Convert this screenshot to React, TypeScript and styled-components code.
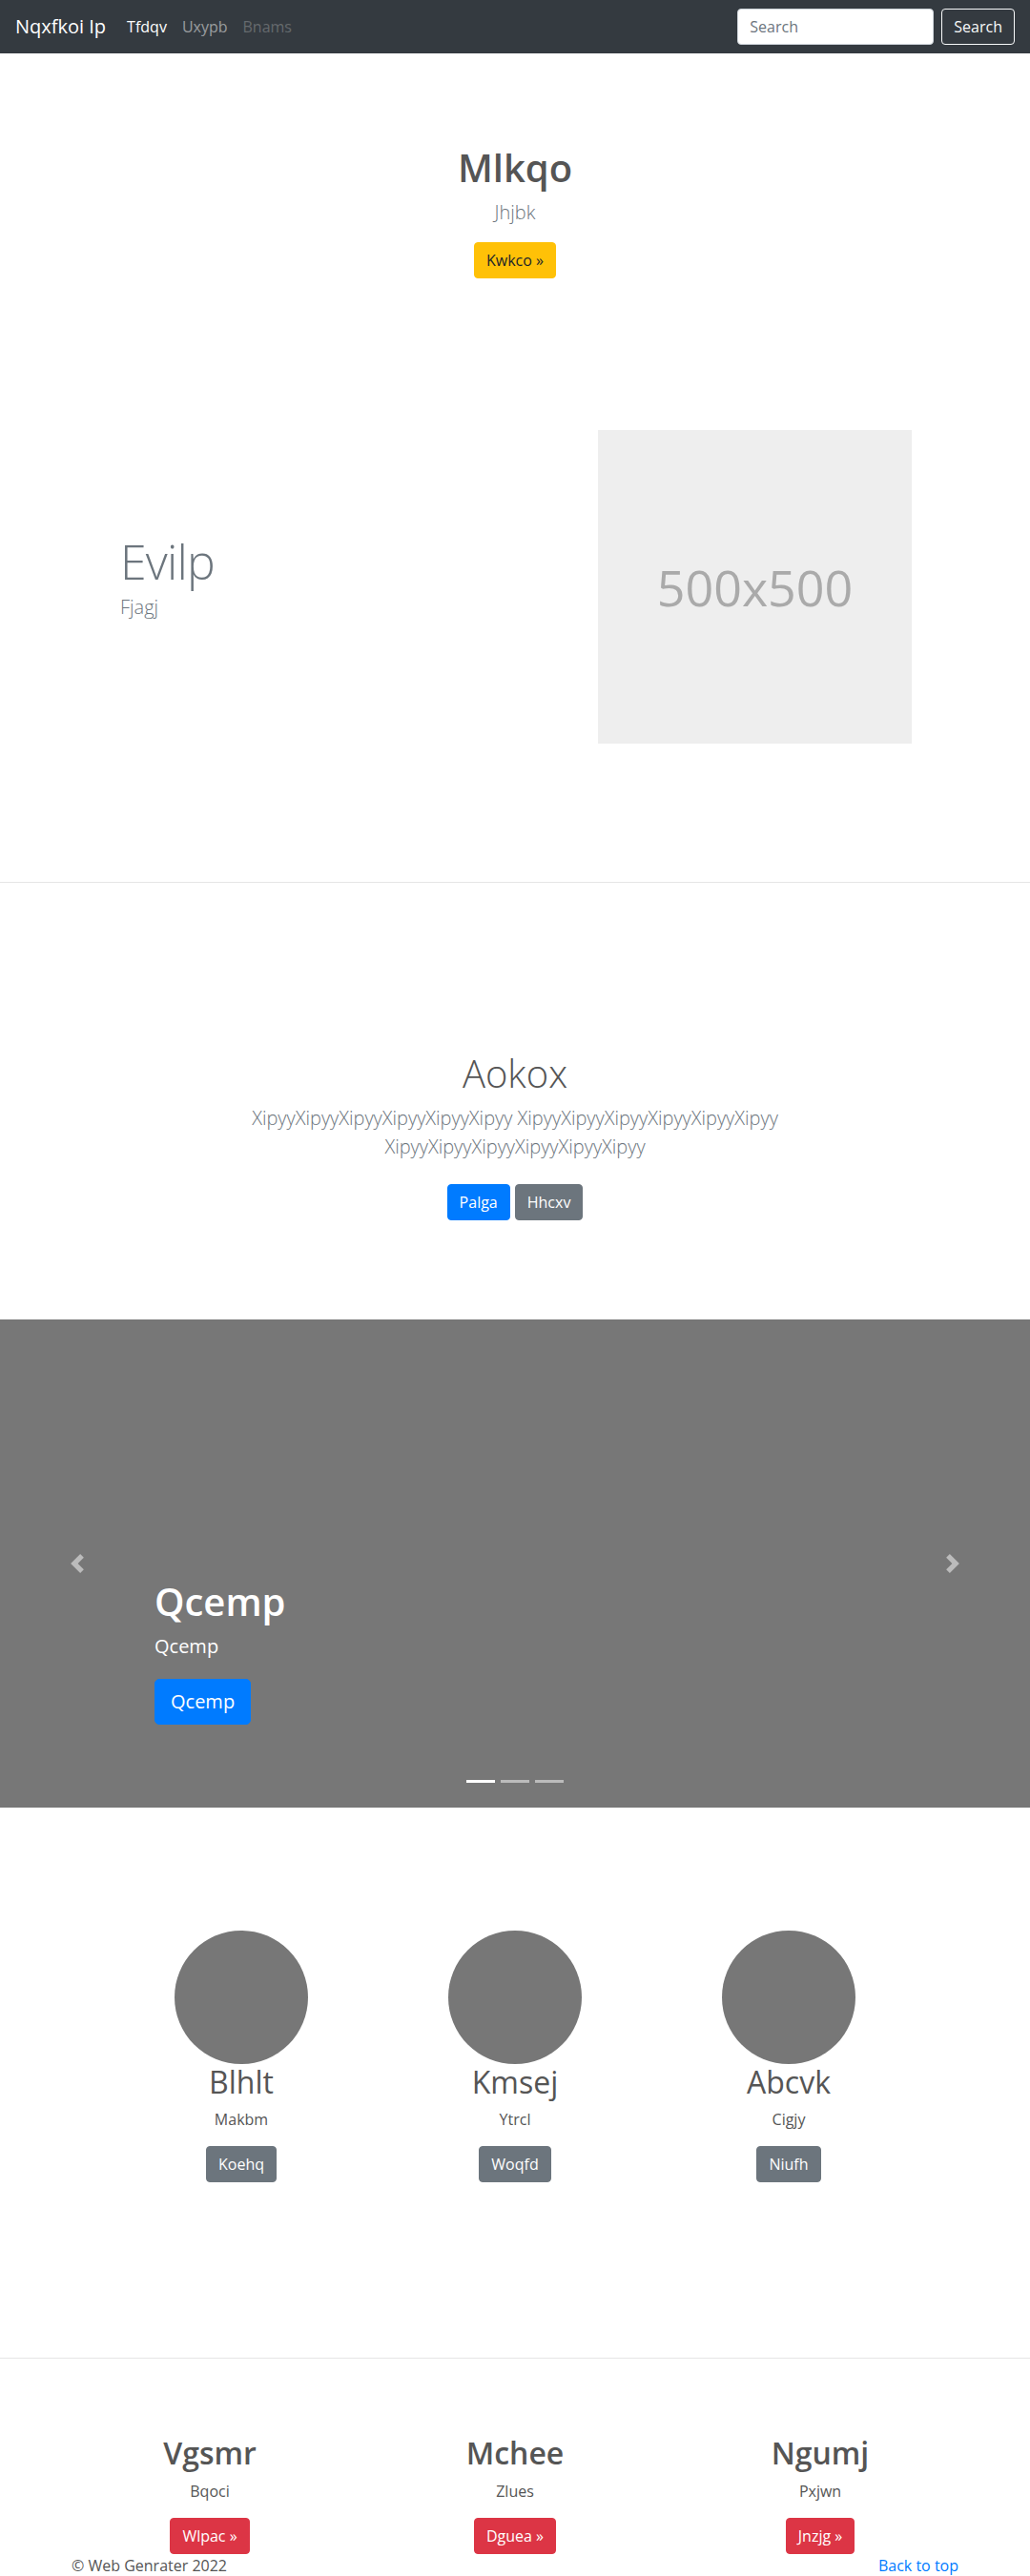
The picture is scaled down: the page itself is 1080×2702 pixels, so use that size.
import React from "react";
import styled, { createGlobalStyle, css } from "styled-components";

const GlobalStyle = createGlobalStyle`
  * { box-sizing: border-box; }
  html, body { margin: 0; padding: 0; }
  body {
    font-family: "Open Sans", "Noto Sans", "Liberation Sans", sans-serif;
    font-size: 16px;
    line-height: 1.5;
    color: #555;
    background: #fff;
  }
`;

type Variant = "primary" | "secondary" | "warning" | "danger" | "outlineLight";

const variantStyles: Record<Variant, ReturnType<typeof css>> = {
  primary: css`background: #007bff; border-color: #007bff; color: #fff;`,
  secondary: css`background: #6c757d; border-color: #6c757d; color: #fff;`,
  warning: css`background: #ffc107; border-color: #ffc107; color: #212529;`,
  danger: css`background: #dc3545; border-color: #dc3545; color: #fff;`,
  outlineLight: css`background: transparent; border-color: #f8f9fa; color: #f8f9fa;`,
};

const Btn = styled.a<{ $variant: Variant; $lg?: boolean }>`
  display: inline-block;
  font-family: inherit;
  font-weight: 400;
  text-decoration: none;
  text-align: center;
  white-space: nowrap;
  border: 1px solid transparent;
  cursor: pointer;
  ${({ $lg }) =>
    $lg
      ? css`padding: 8px 16px; font-size: 20px; line-height: 30px; border-radius: 5px;`
      : css`padding: 6px 12px; font-size: 16px; line-height: 24px; border-radius: 4px;`}
  ${({ $variant }) => variantStyles[$variant]}
`;

/* ---------- Navbar ---------- */
const Navbar = styled.nav`
  height: 56px;
  background: #343a40;
  display: flex;
  align-items: center;
  padding: 0 16px;
`;

const Brand = styled.a`
  font-size: 20px;
  line-height: 30px;
  color: #fff;
  margin-right: 14px;
  text-decoration: none;
  white-space: nowrap;
`;

const NavList = styled.ul`
  display: flex;
  list-style: none;
  margin: 0;
  padding: 0;
  flex: 1;
`;

const NavLink = styled.a<{ $state: "active" | "normal" | "disabled" }>`
  display: block;
  padding: 8px;
  font-size: 16px;
  line-height: 24px;
  text-decoration: none;
  color: ${({ $state }) =>
    $state === "active" ? "#fff" : $state === "normal" ? "rgba(255,255,255,.5)" : "rgba(255,255,255,.25)"};
`;

const SearchForm = styled.form`
  display: flex;
  align-items: center;
  gap: 8px;
  margin: 0;
`;

const SearchInput = styled.input`
  width: 206px;
  height: 38px;
  padding: 6px 12px;
  font-family: inherit;
  font-size: 16px;
  line-height: 24px;
  color: #495057;
  background: #fff;
  border: 1px solid #ced4da;
  border-radius: 4px;
  &::placeholder { color: #6c757d; }
`;

/* ---------- Hero ---------- */
const Hero = styled.section`
  text-align: center;
  padding: 96px 0;
`;

const HeroTitle = styled.h1`
  font-size: 40px;
  line-height: 48px;
  font-weight: 600;
  color: #555;
  margin: 0 0 8px;
`;

const Lead = styled.p`
  font-size: 20px;
  line-height: 30px;
  font-weight: 300;
  color: #6c757d;
  margin: 0 0 16px;
`;

/* ---------- Featurette ---------- */
const Featurette = styled.section`
  width: 960px;
  margin: 0 auto;
  padding: 63px 64px 65px 66px;
  display: flex;
  align-items: center;
  justify-content: space-between;
`;

const FeatText = styled.div`
  flex: 1;
`;

const FeatHeading = styled.h2`
  font-size: 50px;
  line-height: 1;
  font-weight: 300;
  letter-spacing: -0.8px;
  color: #6c757d;
  margin: 0 0 8px;
`;

const Placeholder = styled.div`
  width: 329px;
  height: 329px;
  background: #eee;
  color: #aaa;
  font-size: 52px;
  display: flex;
  align-items: center;
  justify-content: center;
`;

const Divider = styled.hr`
  border: 0;
  border-top: 1px solid rgba(0, 0, 0, 0.1);
  margin: 80px 0;
  height: 0;
`;

/* ---------- Album jumbotron ---------- */
const Album = styled.section`
  text-align: center;
  padding: 96px 0;
`;

const AlbumInner = styled.div`
  max-width: 640px;
  margin: 0 auto;
  padding: 0 15px;
`;

const AlbumTitle = styled.h1`
  font-size: 40px;
  line-height: 48px;
  font-weight: 300;
  color: #555;
  margin: 0 0 8px;
`;

const ButtonRow = styled.div`
  display: flex;
  justify-content: center;
  gap: 5px;
  padding: 8px 0;
`;

/* ---------- Carousel ---------- */
const Carousel = styled.div`
  position: relative;
  height: 512px;
  background: #777;
  overflow: hidden;
`;

const Caption = styled.div`
  position: absolute;
  left: 15%;
  right: 15%;
  bottom: 48px;
  padding: 20px 0;
  color: #fff;
  text-align: left;
`;

const CaptionTitle = styled.h1`
  font-size: 40px;
  line-height: 48px;
  font-weight: 600;
  margin: 0 0 8px;
`;

const CaptionText = styled.p`
  font-size: 20px;
  line-height: 30px;
  margin: 0 0 16px;
`;

const CaptionAction = styled.div`
  padding: 3px 0;
  margin-bottom: 16px;
`;

const Control = styled.a<{ $side: "left" | "right" }>`
  position: absolute;
  top: 0;
  bottom: 0;
  ${({ $side }) => ($side === "left" ? "left: 0;" : "right: 0;")}
  width: 15%;
  display: flex;
  align-items: center;
  justify-content: center;
  opacity: 0.5;
`;

const Indicators = styled.ol`
  position: absolute;
  left: 0;
  right: 0;
  bottom: 0;
  margin: 0 0 16px;
  padding: 0;
  list-style: none;
  display: flex;
  justify-content: center;
`;

const Indicator = styled.li<{ $active?: boolean }>`
  width: 30px;
  height: 3px;
  margin: 10px 3px;
  background: #fff;
  opacity: ${({ $active }) => ($active ? 1 : 0.5)};
`;

/* ---------- Marketing ---------- */
const Marketing = styled.section`
  padding: 129px 0 104px;
  display: grid;
  grid-template-columns: repeat(3, 287px);
  justify-content: center;
  text-align: center;
`;

const Column = styled.div`
  display: flex;
  flex-direction: column;
  align-items: center;
`;

const Circle = styled.div`
  width: 140px;
  height: 140px;
  border-radius: 50%;
  background: #777;
`;

const ColTitle = styled.h2<{ $bold?: boolean }>`
  font-size: 32px;
  line-height: 38.4px;
  font-weight: ${({ $bold }) => ($bold ? 600 : 400)};
  color: #555;
  margin: 0 0 8px;
`;

const ColText = styled.p`
  font-size: 16px;
  line-height: 24px;
  margin: 0 0 16px;
`;

const Features = styled.section`
  width: 960px;
  margin: 0 auto;
  display: grid;
  grid-template-columns: repeat(3, 1fr);
  text-align: center;
`;

/* ---------- Footer ---------- */
const Footer = styled.footer`
  width: 960px;
  margin: 0 auto;
  padding: 0 15px;
  display: flex;
  justify-content: space-between;
  font-size: 16px;
  line-height: 24px;
  color: #555;
`;

const FooterLink = styled.a`
  color: #007bff;
  text-decoration: none;
`;

const Chevron = ({ dir }: { dir: "left" | "right" }) => (
  <svg width="20" height="20" viewBox="0 0 8 8" fill="#fff" aria-hidden="true">
    {dir === "left" ? (
      <path d="M5.25 0l-4 4 4 4 1.5-1.5L4.25 4l2.5-2.5L5.25 0z" />
    ) : (
      <path d="M2.75 0l-1.5 1.5L3.75 4l-2.5 2.5L2.75 8l4-4-4-4z" />
    )}
  </svg>
);

const marketing = [
  { title: "Blhlt", text: "Makbm", btn: "Koehq" },
  { title: "Kmsej", text: "Ytrcl", btn: "Woqfd" },
  { title: "Abcvk", text: "Cigjy", btn: "Niufh" },
];

const features = [
  { title: "Vgsmr", text: "Bqoci", btn: "Wlpac »" },
  { title: "Mchee", text: "Zlues", btn: "Dguea »" },
  { title: "Ngumj", text: "Pxjwn", btn: "Jnzjg »" },
];

export default function App() {
  return (
    <>
      <GlobalStyle />
      <Navbar>
        <Brand href="#">Nqxfkoi Ip</Brand>
        <NavList>
          <li><NavLink $state="active" href="#">Tfdqv</NavLink></li>
          <li><NavLink $state="normal" href="#">Uxypb</NavLink></li>
          <li><NavLink $state="disabled" href="#">Bnams</NavLink></li>
        </NavList>
        <SearchForm onSubmit={(e) => e.preventDefault()}>
          <SearchInput type="text" placeholder="Search" aria-label="Search" />
          <Btn as="button" type="submit" $variant="outlineLight">Search</Btn>
        </SearchForm>
      </Navbar>

      <Hero>
        <HeroTitle>Mlkqo</HeroTitle>
        <Lead>Jhjbk</Lead>
        <Btn $variant="warning" href="#">Kwkco »</Btn>
      </Hero>

      <Featurette>
        <FeatText>
          <FeatHeading>Evilp</FeatHeading>
          <Lead>Fjagj</Lead>
        </FeatText>
        <Placeholder>500x500</Placeholder>
      </Featurette>

      <Divider />

      <Album>
        <AlbumInner>
          <AlbumTitle>Aokox</AlbumTitle>
          <Lead>
            XipyyXipyyXipyyXipyyXipyyXipyy XipyyXipyyXipyyXipyyXipyyXipyy XipyyXipyyXipyyXipyyXipyyXipyy
          </Lead>
          <ButtonRow>
            <Btn $variant="primary" href="#">Palga</Btn>
            <Btn $variant="secondary" href="#">Hhcxv</Btn>
          </ButtonRow>
        </AlbumInner>
      </Album>

      <Carousel>
        <Caption>
          <CaptionTitle>Qcemp</CaptionTitle>
          <CaptionText>Qcemp</CaptionText>
          <CaptionAction>
            <Btn $variant="primary" $lg href="#">Qcemp</Btn>
          </CaptionAction>
        </Caption>
        <Indicators>
          <Indicator $active />
          <Indicator />
          <Indicator />
        </Indicators>
        <Control $side="left" href="#"><Chevron dir="left" /></Control>
        <Control $side="right" href="#"><Chevron dir="right" /></Control>
      </Carousel>

      <Marketing>
        {marketing.map((m) => (
          <Column key={m.title}>
            <Circle />
            <ColTitle>{m.title}</ColTitle>
            <ColText>{m.text}</ColText>
            <Btn $variant="secondary" href="#">{m.btn}</Btn>
          </Column>
        ))}
      </Marketing>

      <Divider />

      <Features>
        {features.map((f) => (
          <Column key={f.title}>
            <ColTitle $bold>{f.title}</ColTitle>
            <ColText>{f.text}</ColText>
            <Btn $variant="danger" href="#">{f.btn}</Btn>
          </Column>
        ))}
      </Features>

      <Footer>
        <span>© Web Genrater 2022</span>
        <FooterLink href="#">Back to top</FooterLink>
      </Footer>
    </>
  );
}
